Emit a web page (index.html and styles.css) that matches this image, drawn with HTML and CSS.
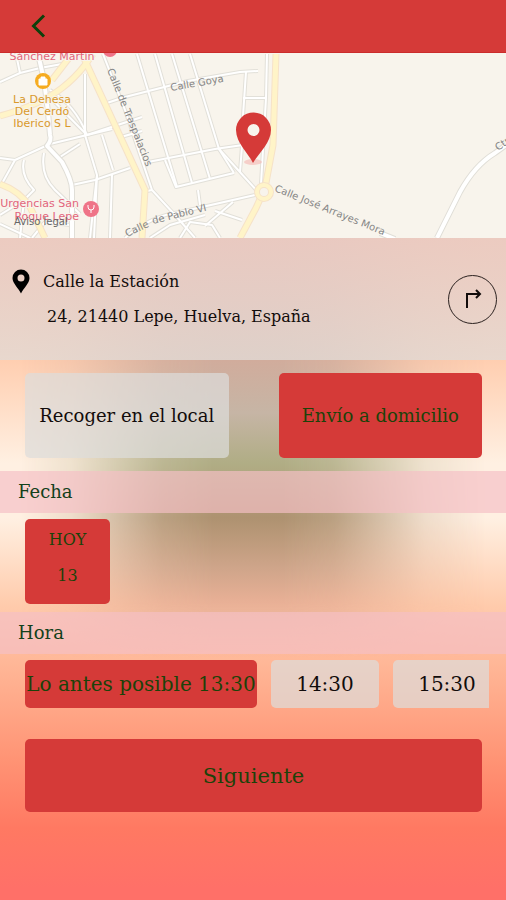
FILE: index.html
```html
<!DOCTYPE html>
<html lang="es">
<head>
    <meta charset="UTF-8">
    <meta name="viewport" content="width=device-width, initial-scale=1">
    <title>Envío a domicilio</title>
    <link rel="stylesheet" href="styles.css">
</head>
<body>
    <header class="topbar">
        <button class="back" aria-label="Volver">
            <svg width="16" height="26" viewBox="0 0 16 26"><path d="M14 2.500 3.500 13 14 23.500"/></svg>
        </button>
    </header>

    <svg class="map" viewBox="0 53 506 185" preserveAspectRatio="xMidYMid slice">
        <defs>
            <!-- Side streets, drawn twice: casing and fill -->
            <g id="streets">
                <path d="M0 82 20 73 40 68 62 64M16 54 20 73M40 54 45 90 50 135"/>
                <path d="M85 74V135L97 175 94 238M50 90Q75 105 87 135L112 129M47 94Q72 120 87 135"/>
                <path d="M0 158 15 160 50 144 87 135 142 117 M15 160 0 187M24 160Q20 175 34 190L24 200 20 238"/>
                <path d="M44 153Q40 175 55 190L80 214M60 157 80 144M72 185 95 180 130 168M97 175 90 238M112 175 110 238M102 135 113 170"/>
                <path d="M107 103 125 97 188 81 240 72 258 71M121 137 142 131M148 162 215 149 243 145"/>
                <path d="M103 54 125 110 152 190M137 54 177 187M155 54 192 183M172 54 210 179M190 54 219 149 234 173"/>
                <path d="M152 190 175 215 195 238M165 160 176 187 234 173M219 149 258 192M242 146 240 172M142 192 152 190M246 72 241 145M243 98H266"/>
                <path d="M198 190 200 205M125 238Q150 216 180 212L255 195M150 238 170 225 205 215M180 238 190 222 212 225 220 238M215 211 242 220M205 226 233 202"/>
                <path d="M0 224 30 238M0 215 24 200M267 54 266 98 261 184M32 238 45 222 70 225"/>
            </g>
            <g id="lanes">
                <path d="M38 54 44 80 48 112 50 135Q52 140 47 146L62 162Q72 180 72 190V238"/>
                <path d="M437 238 460 192Q475 165 495 153L506 145M380 233 395 239"/>
            </g>
            <g id="roads">
                <path d="M0 116Q40 105 62 88 75 78 85 65L93 54M52 80 72 54"/>
                <path d="M82 54 145 190 142 238"/>
                <path d="M276 54 273 145 265 188 256 208 240 238"/>
                <path d="M0 184Q20 191 30 207L45 238"/>
            </g>
        </defs>
        <rect class="land" y="53" width="506" height="185"/>
        <use href="#streets" class="casing-thin"/>
        <use href="#streets" class="street"/>
        <use href="#lanes" class="casing"/>
        <use href="#lanes" class="lane"/>
        <use href="#roads" class="road-edge"/>
        <use href="#roads" class="road"/>
        <circle class="roundabout-edge" cx="264" cy="192" r="7"/>
        <circle class="roundabout" cx="264" cy="192" r="7"/>

        <!-- Street names -->
        <g class="street-name">
            <text x="171" y="91" transform="rotate(-10 171 91)">Calle Goya</text>
            <text x="107" y="70" transform="rotate(68 107 70)">Calle de Traspalacios</text>
            <text x="127" y="237" transform="rotate(-25 127 237)">Calle</text>
            <text x="153" y="224" transform="rotate(-14 153 224)">de Pablo VI</text>
            <text x="274" y="191" transform="rotate(22 274 191)">Calle José Arrayes Mora</text>
            <text x="498" y="151" transform="rotate(-35 498 151)">Ctra</text>
        </g>

        <!-- Places -->
        <g class="place health">
            <text x="52" y="60" text-anchor="middle">Sánchez Martín</text>
            <text x="79" y="207" text-anchor="end">Urgencias San</text>
            <text x="79" y="220" text-anchor="end">Roque Lepe</text>
        </g>
        <circle class="health-dot" cx="110" cy="50" r="7"/>
        <circle class="health-dot" cx="91" cy="209" r="8"/>
        <path class="health-mark" d="M88 205v2q0 3 3 3t3-3v-2M91 210v3"/>
        <g class="place shop">
            <text x="42" y="103" text-anchor="middle">La Dehesa</text>
            <text x="42" y="115" text-anchor="middle">Del Cerdó</text>
            <text x="42" y="127" text-anchor="middle">Ibérico S L</text>
        </g>
        <circle class="shop-dot" cx="43" cy="81" r="8"/>
        <path class="shop-mark" d="M39 79h8v6h-8zM41 79v-2h4v2"/>
        <text class="legal" x="14" y="225">Aviso legal</text>

        <!-- Marker -->
        <ellipse class="marker-shadow" cx="253" cy="162" rx="9" ry="3"/>
        <path class="marker" fill-rule="evenodd" d="M253 163C249 154 236 143 236 130a17.500 17.500 0 0 1 35 0C271 143 258 154 253 163ZM253.500 124a6 6 0 1 0 0 12 6 6 0 0 0 0-12Z"/>
    </svg>

    <main>
        <section class="address">
            <svg class="pin" width="18" height="25" viewBox="0 0 18 25"><path fill-rule="evenodd" d="M9 24.500C6.500 19 .5 14.500.5 9a8.500 8.500 0 0 1 17 0C17.500 14.500 11.500 19 9 24.500ZM9 5.500a3.500 3.500 0 1 0 0 7 3.500 3.500 0 0 0 0-7Z"/></svg>
            <address>
                <div>Calle la Estación</div>
                <div class="town">24, 21440 Lepe, Huelva, España</div>
            </address>
            <button class="directions" aria-label="Cómo llegar">
                <svg width="20" height="22" viewBox="0 0 20 22"><path d="M4 20V6h13M13 2l4 4-4 4"/></svg>
            </button>
        </section>

        <div class="modes">
            <button class="choice">Recoger en el local</button>
            <button class="choice selected">Envío a domicilio</button>
        </div>

        <h2>Fecha</h2>
        <div class="dates">
            <button class="choice selected day"><span>HOY</span><span>13</span></button>
        </div>

        <h2>Hora</h2>
        <div class="times">
            <button class="choice selected asap">Lo antes posible 13:30</button>
            <button class="choice">14:30</button>
            <button class="choice">15:30</button>
        </div>

        <button class="choice selected next">Siguiente</button>
    </main>
</body>
</html>
```
FILE: styles.css
```css
:root {
    --red: #d53a38;
    --green: #1c4209;
    --ink: #120c0b;
}

* {
    box-sizing: border-box;
}

body {
    margin: 0;
    min-height: 100vh;
    display: flex;
    flex-direction: column;
    font-family: "DejaVu Serif", serif;
    font-size: 16px;
    color: var(--ink);
    background: #ff7068;
}

button {
    font: inherit;
    color: inherit;
    padding: 0;
    border: none;
    background: none;
    cursor: pointer;
}

svg {
    display: block;
}

.topbar {
    height: 53px;
    padding-left: 30px;
    display: flex;
    align-items: center;
    background: var(--red);
    border-bottom: 1px solid #cb2c2b;
}

.back path {
    fill: none;
    stroke: #0d400b;
    stroke-width: 3;
}

/* Map */
.map {
    width: 100%;
    height: 185px;
    font-family: "DejaVu Sans", sans-serif;
}

.land {
    fill: #f8f4ec;
}

.casing-thin,
.casing,
.street,
.lane,
.road-edge,
.road {
    fill: none;
    stroke-linejoin: round;
}

.casing-thin {
    stroke: #e2e0d9;
    stroke-width: 4;
}

.casing {
    stroke: #e0ded7;
    stroke-width: 6;
}

.street {
    stroke: #fff;
    stroke-width: 2;
}

.lane {
    stroke: #fff;
    stroke-width: 4;
}

.road-edge {
    stroke: #f6e2c8;
    stroke-width: 7;
}

.road {
    stroke: #fff4c8;
    stroke-width: 5;
}

.roundabout-edge {
    fill: #f8f4ec;
    stroke: #f6e2c8;
    stroke-width: 6;
}

.roundabout {
    fill: none;
    stroke: #fff4c8;
    stroke-width: 4;
}

.street-name {
    font-size: 10px;
    fill: #858585;
}

.place {
    font-size: 11px;
    stroke: #f8f4ec;
    stroke-width: 2;
    paint-order: stroke;
}

.health {
    fill: #e2647c;
}

.shop {
    fill: #d9992c;
}

.health-dot {
    fill: #ef7488;
}

.health-mark,
.shop-mark {
    fill: none;
    stroke: #fff;
}

.shop-dot {
    fill: #f6ac21;
}

.shop-mark {
    fill: #fff;
}

.legal {
    font-size: 10px;
    fill: #666;
}

.marker {
    fill: var(--red);
}

.marker-shadow {
    fill: #f5b5b3;
    opacity: 0.6;
}

/* Order form */
main {
    position: relative;
    z-index: 0;
    flex: 1;
    background: linear-gradient(#ffb894 0, #ffceb0 122px, #fff0e2 225px, #fff0e2 280px, #ffccad 365px, #ffae8e 450px, #ff9475 520px, #ff7962 590px, #ff7068 650px);
}

/* Dark glow behind the middle of the form */
main::before {
    content: "";
    position: absolute;
    z-index: -1;
    top: 0;
    left: 0;
    right: 0;
    height: 420px;
    background: linear-gradient(#e0a697 0, #d1ac9c 122px, #c6b5a5 175px, #b0ad85 225px, #ae9270 280px, #cfa58a 330px, #e9b096 365px, transparent);
    -webkit-mask-image: linear-gradient(90deg, transparent 4%, rgba(0, 0, 0, 0.2) 14%, rgba(0, 0, 0, 0.85) 32%, #000 42%, #000 56%, rgba(0, 0, 0, 0.85) 66%, rgba(0, 0, 0, 0.2) 84%, transparent 96%);
    mask-image: linear-gradient(90deg, transparent 4%, rgba(0, 0, 0, 0.2) 14%, rgba(0, 0, 0, 0.85) 32%, #000 42%, #000 56%, rgba(0, 0, 0, 0.85) 66%, rgba(0, 0, 0, 0.2) 84%, transparent 96%);
}

.address {
    display: flex;
    align-items: center;
    gap: 13px;
    min-height: 122px;
    padding: 0 9px 0 12px;
    background: linear-gradient(rgba(234, 205, 197, 0.9), rgba(226, 218, 213, 0.8));
}

.pin {
    align-self: flex-start;
    margin-top: 31px;
}

address {
    flex: 1;
    font-style: normal;
    line-height: 35px;
}

.town {
    padding-left: 4px;
}

.directions {
    display: grid;
    place-items: center;
    width: 49px;
    height: 49px;
    border: 1px solid #2b211f;
    border-radius: 50%;
}

.directions path {
    fill: none;
    stroke: var(--ink);
    stroke-width: 2;
}

.choice {
    border-radius: 5px;
    background: rgba(221, 221, 219, 0.7);
}

.selected {
    background: var(--red);
    color: var(--green);
}

.modes {
    display: grid;
    grid-template-columns: 1fr 1fr;
    gap: 50px;
    padding: 13px 24px 13px 25px;
    font-size: 18px;
}

.modes .choice {
    height: 85px;
    white-space: nowrap;
}

h2 {
    margin: 0;
    padding-left: 18px;
    font-size: 18px;
    font-weight: normal;
    line-height: 42px;
    color: #13401b;
    background: rgba(244, 192, 197, 0.68);
}

.dates {
    padding: 6px 25px 8px;
}

.day {
    display: flex;
    flex-direction: column;
    align-items: center;
    justify-content: center;
    width: 85px;
    height: 85px;
    padding-bottom: 8px;
    line-height: 36px;
}

.times {
    display: flex;
    gap: 14px;
    margin: 6px 17px 0 25px;
    overflow: hidden;
    font-size: 20px;
}

.times .choice {
    flex: none;
    width: 108px;
    height: 48px;
    white-space: nowrap;
}

.times .asap {
    width: 232px;
}

.next {
    display: block;
    width: calc(100% - 49px);
    height: 73px;
    margin: 31px 24px 24px 25px;
    font-size: 21px;
}
```
